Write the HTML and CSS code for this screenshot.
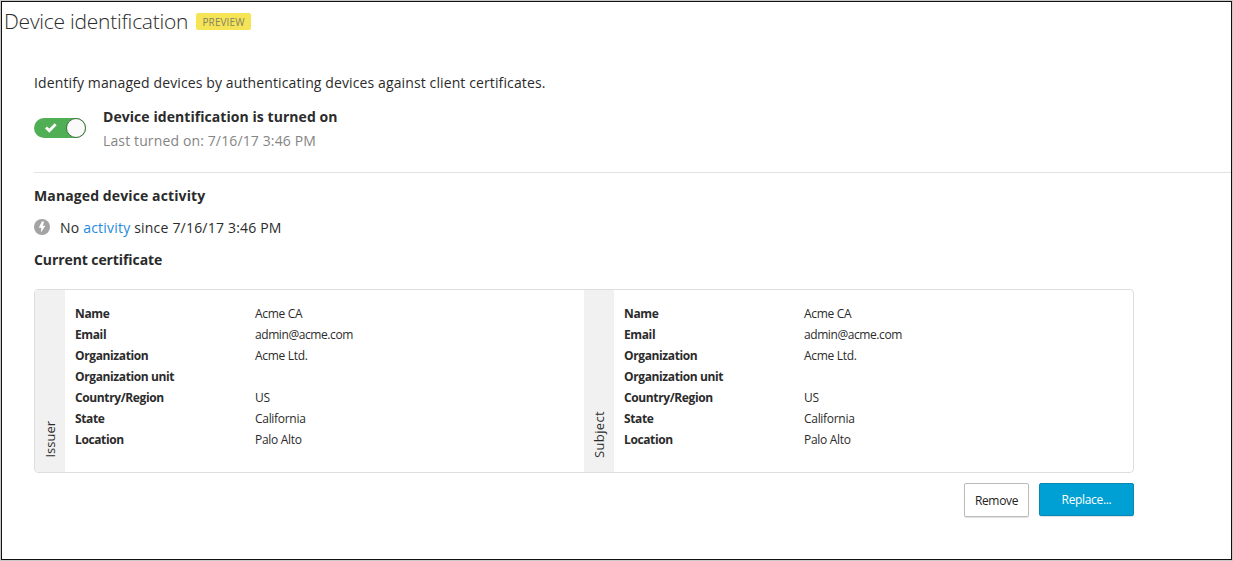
FILE: index.html
```
<!DOCTYPE html>
<html lang="en">
<head>
<meta charset="utf-8">
<title>Device identification</title>
<link rel="stylesheet" href="styles.css">
</head>
<body>
<main class="page">
  <header class="page-header">
    <h1 class="title">Device identification</h1>
    <span class="badge">PREVIEW</span>
  </header>
  <div class="content">
    <p class="intro">Identify managed devices by authenticating devices against client certificates.</p>
    <section class="status">
      <div class="toggle" role="switch" aria-checked="true">
        <svg class="check" viewBox="0 0 12 10" width="12" height="10"><path d="M1 4.6 4.3 7.7 10.6 1.2" fill="none" stroke="#fff" stroke-width="2.8"/></svg>
        <span class="knob"></span>
      </div>
      <div class="status-text">
        <div class="status-title">Device identification is turned on</div>
        <div class="status-date">Last turned on: 7/16/17 3:46 PM</div>
      </div>
    </section>
    <h2 class="heading activity-heading">Managed device activity</h2>
    <div class="activity">
      <svg class="bolt" viewBox="0 0 16 16" width="16" height="16"><circle cx="8" cy="8" r="8" fill="#a3a3a3"/><path d="M7.9 2.4 4.8 8.8H7.3L6.9 13.6 11.4 6.7H8.7L10.2 2.4Z" fill="#fff"/></svg>
      <span class="activity-text">No <a class="link">activity</a> since 7/16/17 3:46 PM</span>
    </div>
    <h2 class="heading cert-heading">Current certificate</h2>
    <section class="certificate">
      <div class="party">
        <div class="side"><span class="side-label">Issuer</span></div>
        <dl class="fields">
          <dt>Name</dt><dd>Acme CA</dd>
          <dt>Email</dt><dd class="email">admin@acme.com</dd>
          <dt>Organization</dt><dd>Acme Ltd.</dd>
          <dt>Organization unit</dt><dd></dd>
          <dt>Country/Region</dt><dd>US</dd>
          <dt>State</dt><dd>California</dd>
          <dt>Location</dt><dd>Palo Alto</dd>
        </dl>
      </div>
      <div class="party">
        <div class="side"><span class="side-label subject">Subject</span></div>
        <dl class="fields">
          <dt>Name</dt><dd>Acme CA</dd>
          <dt>Email</dt><dd class="email">admin@acme.com</dd>
          <dt>Organization</dt><dd>Acme Ltd.</dd>
          <dt>Organization unit</dt><dd></dd>
          <dt>Country/Region</dt><dd>US</dd>
          <dt>State</dt><dd>California</dd>
          <dt>Location</dt><dd>Palo Alto</dd>
        </dl>
      </div>
    </section>
    <div class="actions">
      <button class="button remove">Remove</button>
      <button class="button replace">Replace...</button>
    </div>
  </div>
</main>
</body>
</html>
```
FILE: styles.css
```
* { box-sizing: border-box; }
body {
  margin: 0;
  height: 561px;
  padding: 1px;
  background: #c8c8c8;
  color: #2b2b2b;
  font-family: "Open Sans", "Noto Sans", sans-serif;
  overflow: hidden;
}
.page {
  width: 1231px;
  height: 559px;
  border: 1px solid #111;
  background: #fff;
}
.page-header {
  display: flex;
  align-items: center;
  height: 39px;
  padding-left: 2px;
}
.title {
  margin: 0 0 2px;
  width: 192px;
  font-size: 21px;
  line-height: 30px;
  font-weight: 300;
  letter-spacing: -0.24px;
  white-space: nowrap;
}
.badge {
  width: 55px;
  height: 17px;
  border-radius: 2px;
  background: #f5e556;
  color: #858162;
  font-size: 10px;
  line-height: 18px;
  text-align: center;
  letter-spacing: 0.1px;
}
.content { padding-left: 32px; }
.intro {
  margin: 32px 0 0;
  font-size: 14px;
  line-height: 20px;
  letter-spacing: 0.115px;
}
.status {
  display: flex;
  height: 80px;
  padding-top: 12px;
  border-bottom: 1px solid #e2e2e2;
}
.toggle {
  display: flex;
  align-items: center;
  justify-content: space-between;
  width: 52px;
  height: 20px;
  margin: 13px 17px 0 0;
  padding-left: 11px;
  border-radius: 10px;
  background: #50ae55;
}
.knob {
  width: 20px;
  height: 20px;
  border: 1px solid #39713c;
  border-radius: 50%;
  background: #fafafa;
}
.status-text {
  font-size: 14px;
  line-height: 24px;
  white-space: nowrap;
}
.status-title {
  font-weight: 700;
  letter-spacing: 0.06px;
}
.status-date {
  color: #858585;
  letter-spacing: 0.13px;
}
.heading {
  margin: 0;
  font-size: 14px;
  line-height: 20px;
  font-weight: 700;
}
.activity-heading {
  margin-top: 13px;
  letter-spacing: 0.11px;
}
.activity {
  display: flex;
  align-items: center;
  gap: 10px;
  height: 20px;
  margin-top: 12px;
  font-size: 14px;
  line-height: 20px;
  letter-spacing: 0.2px;
}
.bolt { margin-bottom: 2px; }
.link { color: #2389de; }
.cert-heading {
  margin-top: 12px;
  letter-spacing: -0.09px;
}
.certificate {
  display: flex;
  width: 1100px;
  height: 184px;
  margin-top: 19px;
  border: 1px solid #dedede;
  border-radius: 4px;
  overflow: hidden;
}
.party {
  display: flex;
  width: 549px;
}
.side {
  display: flex;
  flex-direction: column;
  justify-content: flex-end;
  align-items: center;
  width: 30px;
  padding-bottom: 14px;
  background: #f1f1f1;
}
.side-label {
  writing-mode: vertical-rl;
  transform: rotate(180deg);
  font-size: 13px;
  line-height: 20px;
}
.subject { letter-spacing: 0.35px; }
.fields {
  display: grid;
  grid-template-columns: 180px 1fr;
  grid-auto-rows: 21px;
  margin: 13px 0 0 10px;
  font-size: 12px;
  line-height: 21px;
}
.fields dt {
  font-weight: 700;
  letter-spacing: -0.38px;
}
.fields dd {
  margin: 0;
  letter-spacing: -0.3px;
}
.fields .email { letter-spacing: -0.42px; }
.actions {
  display: flex;
  justify-content: flex-end;
  align-items: flex-start;
  gap: 10px;
  width: 1100px;
  margin-top: 10px;
}
.button {
  padding: 0;
  border-radius: 2px;
  font-family: inherit;
  font-size: 12px;
  letter-spacing: -0.33px;
}
.remove {
  width: 65px;
  height: 34px;
  border: 1px solid #bcbcbc;
  background: #fff;
  color: #222;
  box-shadow: 0 1px 1px #e2e2e2;
}
.replace {
  width: 95px;
  height: 33px;
  border: 1px solid #0788b4;
  background: #009fd4;
  color: #fff;
  box-shadow: 0 1px 1px #e2e2e2;
}
```
